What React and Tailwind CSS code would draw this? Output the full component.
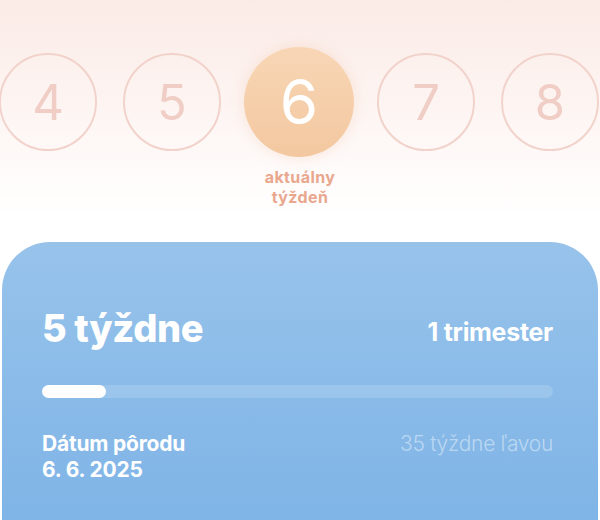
import React from 'react';

const weeks = [4, 5, 6, 7, 8];
const current = 6;

function WeekCircle({ n }) {
  if (n === current) {
    return (
      <div className="w-[110px] h-[110px] shrink-0 -mx-[3px] rounded-full bg-gradient-to-b from-[#f8d6b5] to-[#f3c8a0] shadow-[0_0_14px_rgba(240,190,160,0.35)] flex items-center justify-center">
        <span className="text-[62px] leading-none font-normal text-white">{n}</span>
      </div>
    );
  }
  return (
    <div className="w-[98px] h-[98px] shrink-0 rounded-full border-[2.5px] border-[#f2d3cb] flex items-center justify-center">
      <span className="text-[49px] leading-none font-normal text-[#f0cdc5]">{n}</span>
    </div>
  );
}

export default function App() {
  return (
    <div
      className="w-[600px] h-[520px] overflow-hidden bg-white relative"
      style={{ fontFamily: 'Inter, Roboto, "Noto Sans", sans-serif' }}
    >
      {/* Week picker */}
      <div className="bg-gradient-to-b from-[#fbebe6] to-white pt-[47px] pb-[12px]">
        <div className="flex items-center justify-center gap-[26px] -ml-[2px]">
          {weeks.map(n => (
            <WeekCircle key={n} n={n} />
          ))}
        </div>
        <div className="mt-[10px] text-center text-[16px] leading-[20px] font-bold text-[#e9a78e] tracking-[0.4px]">
          aktuálny
          <br />
          týždeň
        </div>
      </div>

      {/* Pregnancy card */}
      <div className="mt-[23px] mx-[2px] h-[300px] rounded-t-[48px] bg-gradient-to-b from-[#97c3eb] to-[#7db3e6] pl-[40px] pr-[45px] pt-[64px]">
        <div className="flex items-center justify-between">
          <span className="text-[38px] leading-[44px] font-extrabold text-white tracking-[-0.4px]">5 týždne</span>
          <span className="text-[25px] leading-[30px] font-bold text-white mt-[8px] tracking-[-0.3px]">1 trimester</span>
        </div>

        <div className="mt-[35px] h-[13px] rounded-full bg-white/15">
          <div className="h-full w-[64px] rounded-full bg-white" />
        </div>

        <div className="mt-[33px] flex items-start justify-between">
          <div className="text-[21px] leading-[26px] font-bold text-white tracking-[-0.2px]">
            Dátum pôrodu
            <br />
            6. 6. 2025
          </div>
          <span className="text-[21px] leading-[26px] font-light text-white/45 tracking-[-0.3px]">35 týždne ľavou</span>
        </div>
      </div>
    </div>
  );
}
